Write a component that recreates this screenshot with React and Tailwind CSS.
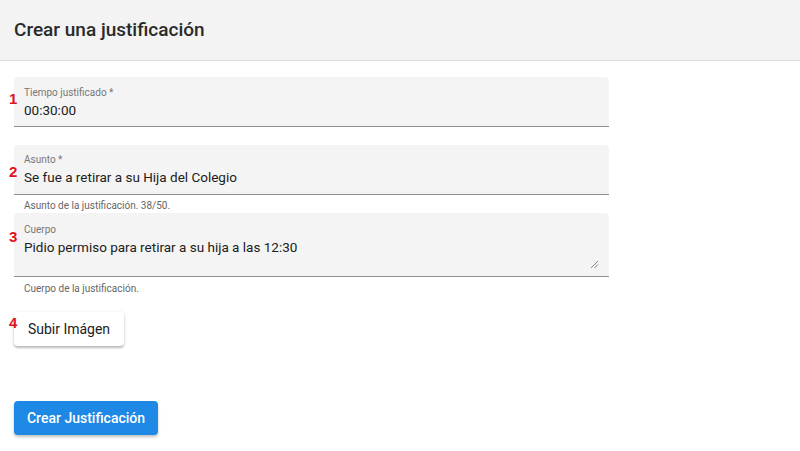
import React from "react";

function Marker({ n, className }) {
  return (
    <span
      className={`absolute z-10 text-[15px] font-bold leading-none text-[#e0141e] ${className}`}
      style={{ fontFamily: '"Liberation Sans", Arial, sans-serif' }}
    >
      {n}
    </span>
  );
}

export default function App() {
  return (
    <div
      className="w-[800px] h-[451px] bg-white overflow-hidden text-[#212121]"
      style={{ fontFamily: "Roboto, 'Noto Sans', sans-serif" }}
    >
      <div className="h-[61px] bg-[#f3f3f3] border-b border-[#dcdcdc] flex items-center pl-[14px]">
        <h1 className="text-[19px] font-medium text-[#2a2a2a] pt-[1px]">Crear una justificación</h1>
      </div>

      <div className="pl-[14px] pt-[16px] w-[609px] flex flex-col">
        {/* Field 1 */}
        <div className="relative">
          <Marker n="1" className="left-[-5px] top-[14px]" />
          <div className="h-[50px] bg-[#f4f4f4] rounded-t-[4px] border-b border-[#8f8f8f] pl-[10px] pt-[9px]">
            <div className="text-[10px] leading-[14px] text-[#777]">Tiempo justificado *</div>
            <div className="text-[13.5px] leading-[19px] mt-[1px]">00:30:00</div>
          </div>
        </div>

        {/* Field 2 */}
        <div className="relative mt-[18px]">
          <Marker n="2" className="left-[-5px] top-[19px]" />
          <div className="h-[50px] bg-[#f4f4f4] rounded-t-[4px] border-b border-[#8f8f8f] pl-[10px] pt-[8px]">
            <div className="text-[10px] leading-[14px] text-[#777]">Asunto *</div>
            <div className="text-[13.5px] leading-[19px] mt-[1px]">Se fue a retirar a su Hija del Colegio</div>
          </div>
          <div className="h-[18px] pl-[10px] text-[10px] leading-[22px] text-[#666]">
            Asunto de la justificación. 38/50.
          </div>
        </div>

        {/* Field 3 */}
        <div className="relative">
          <Marker n="3" className="left-[-5px] top-[16px]" />
          <div className="relative h-[64px] bg-[#f4f4f4] rounded-t-[4px] border-b border-[#8f8f8f] pl-[10px] pt-[10px]">
            <div className="text-[10px] leading-[14px] text-[#777]">Cuerpo</div>
            <div className="text-[13.5px] leading-[19px] mt-[1px]">Pidio permiso para retirar a su hija a las 12:30</div>
            <svg className="absolute right-[10px] bottom-[7px]" width="9" height="9" viewBox="0 0 9 9">
              <path d="M1 8 L8 1 M4.5 8 L8 4.5" stroke="#8a8a8a" strokeWidth="1" />
            </svg>
          </div>
          <div className="h-[18px] pl-[10px] text-[10px] leading-[24px] text-[#666]">
            Cuerpo de la justificación.
          </div>
        </div>

        {/* Upload button */}
        <div className="relative mt-[17px]">
          <Marker n="4" className="left-[-5px] top-[3px]" />
          <button className="h-[34px] w-[110px] bg-white rounded-[4px] text-[14px] text-[#222] shadow-[0_2px_2px_rgba(0,0,0,0.2),0_1px_4px_rgba(0,0,0,0.12)]">
            Subir Imágen
          </button>
        </div>

        {/* Submit */}
        <div className="mt-[55px]">
          <button className="h-[34px] w-[144px] bg-[#1e88e5] rounded-[4px] text-[14px] font-medium text-white shadow-[0_2px_3px_rgba(0,0,0,0.25)]">
            Crear Justificación
          </button>
        </div>
      </div>
    </div>
  );
}
